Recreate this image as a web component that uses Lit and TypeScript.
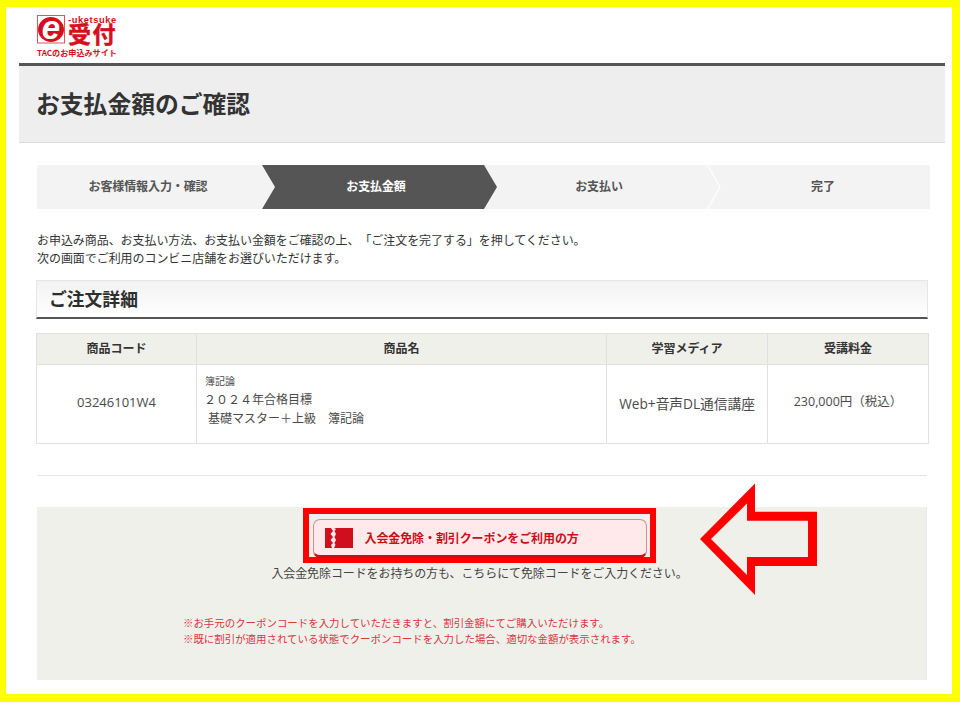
import { LitElement, html, css } from "lit";
import { customElement } from "lit/decorators.js";

@customElement("app-root")
export class AppRoot extends LitElement {
  static styles = css`
    :host {
      display: block;
      position: relative;
      width: 960px;
      height: 705px;
      background: #fff;
      overflow: hidden;
      color: #3c3c3c;
      font-family: "Noto Sans CJK JP", "Noto Sans", sans-serif;
      font-size: 12px;
      text-spacing-trim: space-all;
    }
    .frame {
      box-sizing: border-box;
      height: 702px;
      border-style: solid;
      border-color: #ffff00;
      border-width: 7px 8px 8px 6px;
      padding: 0 7px 0 13px;
    }
    .logo-area { height: 56px; padding: 8px 0 0 18px; box-sizing: border-box; }
    .logo { display: block; overflow: visible; }
    .title {
      box-sizing: border-box;
      height: 80px;
      border-top: 3px solid #555;
      border-bottom: 1px solid #dcdcdc;
      background: #eeeeee;
      display: flex;
      align-items: center;
      padding: 0 18px 2px 17px;
      font-size: 23.8px;
      font-weight: 700;
      color: #333;
      line-height: 1;
    }
    .content { padding: 0 15px 0 18px; }
    .steps {
      display: flex;
      height: 44px;
      margin-top: 22px;
      background: #f3f3f3;
      font-weight: 700;
      color: #555;
    }
    .step {
      position: relative;
      box-sizing: border-box;
      display: flex;
      align-items: center;
      justify-content: center;
      flex: none;
      letter-spacing: -0.1px;
      padding-bottom: 4px;
    }
    .s1 { width: 225px; padding-right: 3px; }
    .s2 {
      width: 235px;
      padding-right: 7px;
      background: #555;
      color: #fff;
      z-index: 1;
      clip-path: polygon(0 0, 222px 0, 100% 50%, 222px 100%, 0 100%, 13px 50%);
    }
    .s3 { width: 237px; margin-left: -13px; padding-right: 7px; }
    .s4 { flex: 1; margin-left: -13px; padding-left: 8px; }
    .chev { position: absolute; right: 0; top: 0; }
    .intro { margin: 22px 0 0; line-height: 18px; color: #333; letter-spacing: -0.06px; }
    .heading {
      box-sizing: border-box;
      height: 39px;
      margin: 13px 2px 0 -1px;
      padding-left: 12px;
      display: flex;
      align-items: center;
      border: 1px solid #e6e6e6;
      border-bottom: 2px solid #555;
      background: linear-gradient(#f2f2f2, #ffffff);
      font-size: 17.8px;
      font-weight: 700;
      color: #2e2e2e;
      line-height: 1;
    }
    table {
      width: 892px;
      height: 111px;
      margin: 14px 0 0 -1px;
      border-collapse: collapse;
      table-layout: fixed;
      border: 1px solid #e0e0e0;
    }
    th, td { border: 1px solid #e0e0e0; text-align: center; padding: 0; }
    th {
      box-sizing: border-box;
      height: 31px;
      padding-bottom: 3px;
      line-height: 18px;
      background: #f0f0eb;
      font-size: 12px;
      font-weight: 700;
      color: #333;
    }
    td {
      font-family: "Open Sans", "Noto Sans CJK JP", sans-serif;
      font-size: 13px;
      color: #4a4a4a;
      padding-bottom: 5px;
    }
    td.name {
      font-family: "Noto Sans CJK JP", sans-serif;
      text-align: left;
      padding: 0 0 7px 8px;
      font-size: 12px;
      line-height: 19px;
    }
    .cat { font-size: 10px; line-height: 14px; margin: 0 0 1px; }
    .l1 { margin-left: -1px; }
    .l2 { padding-left: 3px; }
    td.media { font-size: 13.700px; padding-bottom: 3px; }
    td.price { font-size: 12.500px; padding-bottom: 8px; }
    hr { border: 0; border-top: 1px solid #e5e5e5; margin: 31px 3px 0 0; }
    .panel {
      box-sizing: border-box;
      height: 173px;
      margin: 31px 3px 0 0;
      background: #f0f0eb;
      padding-top: 1px;
      display: flex;
      flex-direction: column;
      align-items: center;
      border-right: 1px solid #e8e8e4;
    }
    .mark {
      box-sizing: border-box;
      width: 353px;
      height: 55px;
      border: 6px solid #ff0000;
      padding: 5px 3px 0 4px;
      margin-right: 5px;
    }
    .btn {
      box-sizing: border-box;
      height: 39px;
      display: flex;
      align-items: center;
      gap: 12px;
      padding: 0 0 0 11px;
      border: 1px solid #e08a8e;
      border-bottom: 3px solid #c8101c;
      border-radius: 7px;
      background: #ffe9ea;
      color: #c8101c;
      font-weight: 700;
      letter-spacing: -0.1px;
    }
    .hint { margin: 1px 4px 0 0; line-height: 18px; color: #444; letter-spacing: -0.1px; }
    .notes {
      align-self: flex-start;
      margin: 33px 0 0 146px;
      font-size: 10.450px;
      line-height: 16px;
      color: #d8353f;
    }
    .notes p { margin: 0; }
    .arrow { position: absolute; left: 695px; top: 478px; }
  `;

  render() {
    return html`
      <div class="frame">
        <div class="logo-area">
          <svg class="logo" width="82" height="42" viewBox="0 0 82 42">
            <rect x="0.5" y="0.5" width="27" height="27.5" fill="#fff" stroke="#e8505a" />
            <ellipse cx="14" cy="14.5" rx="13" ry="12.5" fill="#d5101c" />
            <text x="14" y="23.500" text-anchor="middle" font-family="Liberation Sans" font-weight="700" font-style="italic" font-size="33" fill="#fff">e</text>
            <text x="31" y="7.500" font-family="Liberation Sans" font-weight="700" font-size="9.300" letter-spacing="0.6" fill="#d5101c">-uketsuke</text>
            <text x="31" y="27.500" font-family="Noto Sans CJK JP" font-weight="700" font-size="23" letter-spacing="1.500" fill="#d5101c" stroke="#d5101c" stroke-width="0.5">受付</text>
            <text x="0" y="41" font-family="Noto Sans CJK JP" font-weight="700" font-size="8.100" fill="#d5101c">TACのお申込みサイト</text>
          </svg>
        </div>
        <div class="title">お支払金額のご確認</div>
        <div class="content">
          <div class="steps">
            <div class="step s1">お客様情報入力・確認</div>
            <div class="step s2">お支払金額</div>
            <div class="step s3">
              お支払い
              <svg class="chev" width="14" height="44" viewBox="0 0 14 44">
                <path d="M0.5 0 L13 22 L0.5 44" fill="none" stroke="#fff" stroke-width="1.2" />
              </svg>
            </div>
            <div class="step s4">完了</div>
          </div>
          <p class="intro">
            お申込み商品、お支払い方法、お支払い金額をご確認の上、「ご注文を完了する」を押してください。<br />
            次の画面でご利用のコンビニ店舗をお選びいただけます。
          </p>
          <div class="heading">ご注文詳細</div>
          <table>
            <colgroup>
              <col style="width:160px" /><col style="width:410px" /><col style="width:161px" /><col style="width:161px" />
            </colgroup>
            <tr>
              <th>商品コード</th><th>商品名</th><th>学習メディア</th><th>受講料金</th>
            </tr>
            <tr>
              <td>03246101W4</td>
              <td class="name">
                <div class="cat">簿記論</div>
                <div class="l1">２０２４年合格目標</div>
                <div class="l2">基礎マスター＋上級　簿記論</div>
              </td>
              <td class="media">Web+音声DL通信講座</td>
              <td class="price">230,000円（税込）</td>
            </tr>
          </table>
          <hr />
          <div class="panel">
            <div class="mark">
              <div class="btn">
                <svg width="28" height="20" viewBox="0 0 28 20">
                  <path fill="#cf0f1d" d="M0 0H6L8 3 5.500 6 8 9 5.500 12 8 15 6 17 7 20H0Z" />
                  <path fill="#cf0f1d" d="M9 0H28V20H9L10.500 17 9.500 15 11 12 9.500 9 11 6 9.500 3 11 1Z" />
                </svg>
                入会金免除・割引クーポンをご利用の方
              </div>
            </div>
            <div class="hint">入会金免除コードをお持ちの方も、こちらにて免除コードをご入力ください。</div>
            <div class="notes">
              <p>※お手元のクーポンコードを入力していただきますと、割引金額にてご購入いただけます。</p>
              <p>※既に割引が適用されている状態でクーポンコードを入力した場合、適切な金額が表示されます。</p>
            </div>
          </div>
        </div>
      </div>
      <svg class="arrow" width="130" height="122" viewBox="695 478 130 122">
        <path fill="#ff0000" fill-rule="evenodd"
          d="M700 539 L755 483.500 V511.700 H817 V566 H755 V595 Z
             M711 539 L747 575 V557 H808 V520.700 H747 V503.500 Z" />
      </svg>
    `;
  }
}
